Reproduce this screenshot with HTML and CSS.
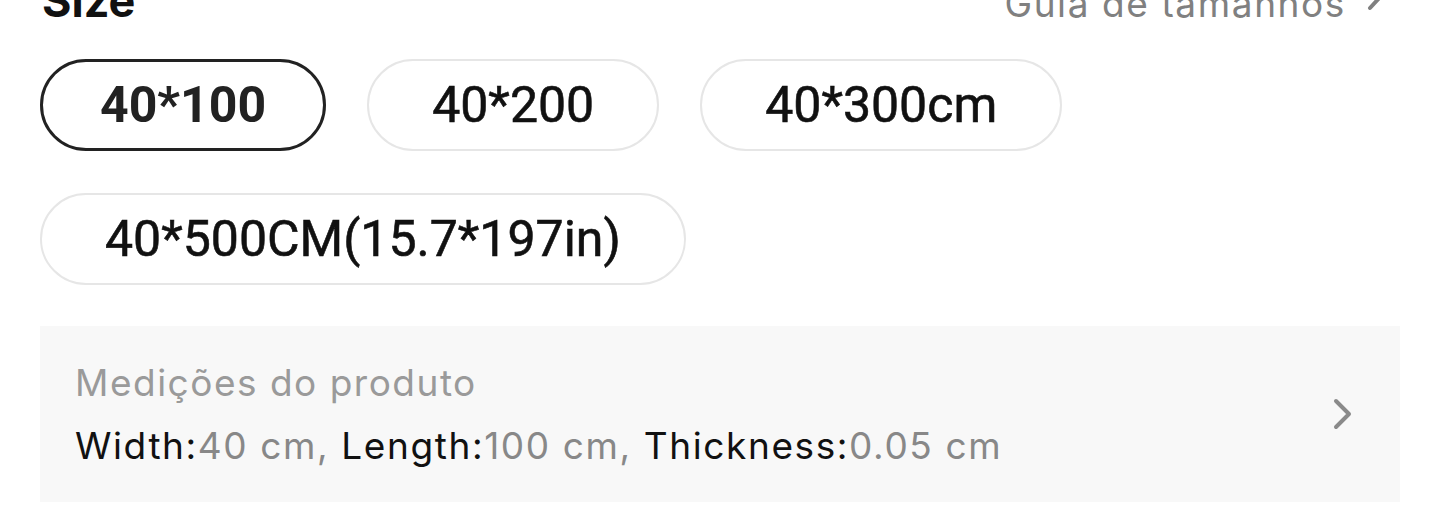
FILE: index.html
```html
<!DOCTYPE html>
<html lang="pt">
<head>
<meta charset="utf-8">
<title>Size</title>
<link rel="stylesheet" href="styles.css">
</head>
<body>
<section class="size-section">
  <div class="size-header">
    <h2 class="size-title">Size</h2>
    <a class="size-guide" href="#">
      <span>Guia de tamanhos</span>
      <svg class="guide-chevron" viewBox="0 0 20 32" width="20" height="32" aria-hidden="true">
        <path d="M4 3 L16 16 L4 29" fill="none" stroke="#808080" stroke-width="4" stroke-linecap="round" stroke-linejoin="round"/>
      </svg>
    </a>
  </div>

  <div class="size-options">
    <button class="pill pill-selected">40*100</button>
    <button class="pill">40*200</button>
    <button class="pill">40*300cm</button>
    <button class="pill">40*500CM(15.7*197in)</button>
  </div>

  <div class="measure-panel">
    <div class="measure-text">
      <div class="measure-title">Medições do produto</div>
      <div class="measure-values">
        <span class="label">Width:</span><span class="value">40 cm, </span><span class="label">Length:</span><span class="value">100 cm, </span><span class="label">Thickness:</span><span class="value">0.05 cm</span>
      </div>
    </div>
    <svg class="panel-chevron" viewBox="0 0 22 34" width="22" height="34" aria-hidden="true">
      <path d="M4 4 L17 17 L4 30" fill="none" stroke="#8a8a8a" stroke-width="4" stroke-linecap="round" stroke-linejoin="round"/>
    </svg>
  </div>
</section>
</body>
</html>
```

FILE: styles.css
```css
html, body {
  margin: 0;
  padding: 0;
  background: #ffffff;
}

body {
  font-family: Inter, "Liberation Sans", Arial, sans-serif;
  color: #111111;
  overflow: hidden;
}

.size-section {
  padding: 0 40px;
}

.size-header {
  display: flex;
  justify-content: space-between;
  align-items: baseline;
  height: 50px;
  margin-top: -24px;
  padding-left: 2px;
  padding-right: 14px;
}

.size-title {
  margin: 0;
  font-size: 45px;
  line-height: 50px;
  font-weight: 700;
  color: #111111;
}

.size-guide {
  display: flex;
  align-items: baseline;
  gap: 20px;
  font-size: 37px;
  line-height: 50px;
  letter-spacing: 1.6px;
  color: #808080;
  text-decoration: none;
}

.guide-chevron {
  align-self: center;
  position: relative;
  top: -9px;
}

.size-options {
  display: flex;
  flex-wrap: wrap;
  gap: 42px 41px;
  margin-top: 33px;
}

.pill {
  display: inline-flex;
  align-items: center;
  justify-content: center;
  box-sizing: border-box;
  height: 92px;
  padding: 0 63px;
  border: 2px solid #e6e6e6;
  border-radius: 46px;
  background: #ffffff;
  font-family: Roboto, "Liberation Sans", Arial, sans-serif;
  font-size: 50px;
  font-weight: 400;
  color: #111111;
  -webkit-text-stroke: 0.6px #111111;
  cursor: pointer;
}

.pill-selected {
  padding: 0 57px;
  border: 3px solid #222222;
  font-weight: 700;
  color: #222222;
  -webkit-text-stroke: 0;
}

.measure-panel {
  display: flex;
  align-items: center;
  justify-content: space-between;
  box-sizing: border-box;
  height: 176px;
  margin-top: 41px;
  padding: 0 46px 0 35px;
  background: #f8f8f8;
}

.measure-text {
  display: flex;
  flex-direction: column;
  gap: 15px;
  padding-top: 1px;
}

.measure-title {
  font-size: 37px;
  line-height: 48px;
  letter-spacing: 1.5px;
  color: #9a9a9a;
}

.measure-values {
  font-size: 37px;
  line-height: 48px;
  letter-spacing: 1.6px;
  white-space: nowrap;
}

.label {
  color: #111111;
}

.value {
  color: #888888;
}
```
